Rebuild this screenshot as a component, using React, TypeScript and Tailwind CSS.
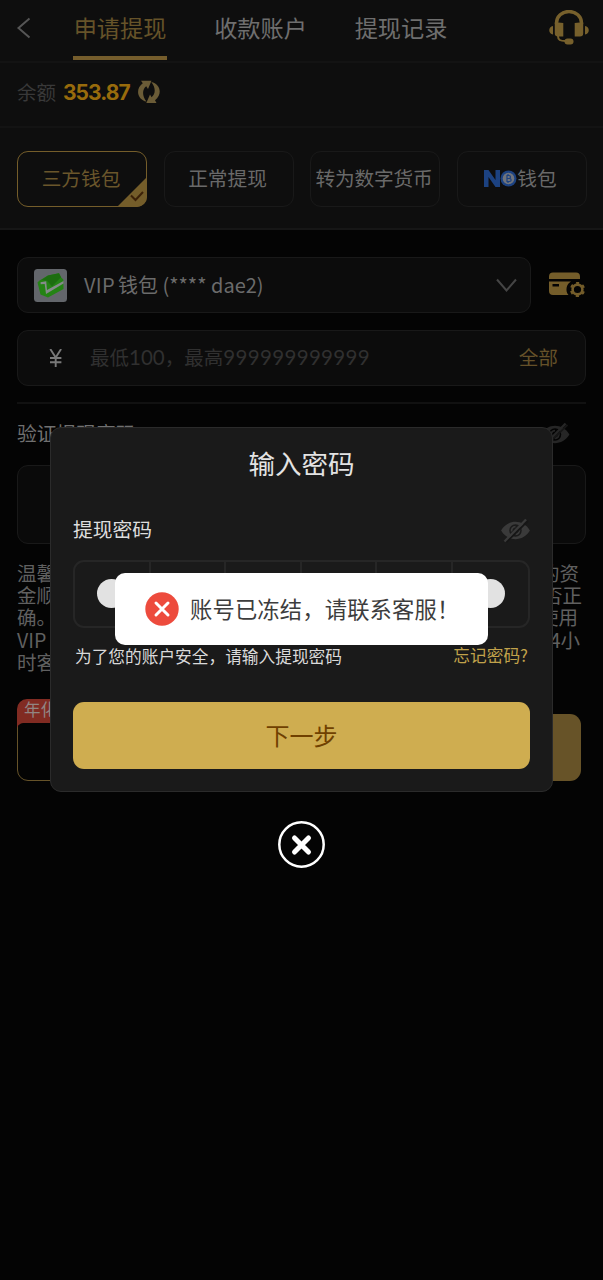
import React from "react";

const Check = () => (
  <svg className="absolute -right-px -bottom-px h-[31px] w-[31px]" viewBox="0 0 31 31" fill="none">
    <path d="M1 31 31 1v20a10 10 0 0 1-10 10Z" fill="#745d2a" />
    <path d="m15 19.500 4.500 4.500 7.500-8" stroke="#3c2108" strokeWidth="2" />
  </svg>
);

const Headset = () => (
  <svg className="h-[35px] w-[40px]" viewBox="0 0 40 35" fill="none">
    <path d="M7.500 14v-1a12.500 11.500 0 0 1 25 0v1" stroke="#77602c" strokeWidth="3.400" />
    <path d="M5.800 12.500h3.500l5 .5v13.500H9a3.200 3.200 0 0 1-3.200-3.200ZM34.200 12.500h-3.500l-5 .5v13.500h5.300a3.200 3.200 0 0 0 3.200-3.200ZM4 16v8.500c-5-1-5-7.500 0-8.500ZM36 16v8.500c5-1 5-7.500 0-8.500Z" fill="#77602c" />
    <path d="M9 26c0 4 2 5 7.500 5" stroke="#77602c" strokeWidth="2" />
    <rect x="15.500" y="28.500" width="9" height="6" rx="3" fill="#77602c" />
  </svg>
);

const Refresh = () => (
  <svg className="h-6 w-6" viewBox="0 0 24 24" fill="#6b5c37">
    <path d="M4 .800h10.500L11 9 9.200 6.200C5 9.500 5 16 9.500 21.500 1 20-2.500 9.500 5.800 3.300Z" />
    <path d="M19.500 23H9.300L13 14.500l1.600 2.800c4.200-3.300 4.200-9.800-.3-15.300 8.500 1.500 12 12 3.700 18.200Z" />
  </svg>
);

const WalletLogo = () => (
  <svg className="h-[33px] w-[33px]" viewBox="0 0 33 33" fill="none">
    <rect width="33" height="33" rx="3.500" fill="#63666b" />
    <path d="m3.500 13.500 2-2L14 6.500l11-2.300 2 4 2.300 2.300.2 9.500L14 28.500l-7.500-3Z" fill="#248314" />
    <path d="m14 6.500 11-2.300 2 4-9 9-5-5.500-5.500-.7Z" fill="#1d6d10" />
    <path d="m6.500 13.200 5.700-1 .8 8.800L29.500 12v2.500L12 25l-1.300-10-4 .2Z" fill="#858b8a" />
  </svg>
);

const CardGear = () => (
  <svg className="h-[26px] w-[37px]" viewBox="0 0 37 26" fill="none">
    <path d="M0 7V4.500A4 4 0 0 1 4 .5h23a4 4 0 0 1 4 4V7Z" fill="#745d2a" />
    <path fillRule="evenodd" d="M0 9.500h22a9 9 0 0 0-2.500 13.500H4a4 4 0 0 1-4-4ZM3.500 12v2.500H10V12Z" fill="#745d2a" />
    <g stroke="#745d2a">
      <circle cx="28.500" cy="17.500" r="4.900" strokeWidth="2.600" />
      <circle cx="28.500" cy="17.500" r="6.600" strokeWidth="2" strokeDasharray="3.200 3.711" strokeDashoffset="1.600" transform="rotate(-90 28.500 17.500)" />
    </g>
  </svg>
);

const EyeOff = ({ className }: { className: string }) => (
  <svg className={className} viewBox="0 0 30 26" fill="none">
    <path fillRule="evenodd" d="M0 13C7 1 23 1 30 13 23 25 7 25 0 13Zm15-6.500a6.500 6.500 0 1 0 0 13 6.500 6.500 0 0 0 0-13Z" fill="currentColor" />
    <path d="M15 9a4 4 0 0 0-4 5M19 12a4 4 0 0 1-4 5" stroke="currentColor" strokeWidth="1.800" />
    <path d="M5.500 25 28 3" stroke="#161616" strokeWidth="2" />
    <path d="M3.500 24.500 26 1.500" stroke="currentColor" strokeWidth="2.400" />
  </svg>
);

const notice = [
  ["温馨", "的资", "pr-[7px]"],
  ["金顺", "否正", "pr-[4px]"],
  ["确。", "使用", "pr-[8px]"],
  ["VIP", "24小", "pr-[6px]"],
  ["时客", "", ""],
];

const option = "flex h-14 w-[130px] items-center justify-center rounded-[11px] border border-[#191919] pb-[2px] pr-[2px] text-[19.700px] text-[#696969]";

export default function App() {
  return (
    <div className="relative h-[1280px] w-[603px] overflow-hidden bg-[#040404] font-['Noto_Sans_CJK_SC',sans-serif] whitespace-nowrap">
      <header className="flex h-[63px] border-b-2 border-[#131313] bg-[#0e0e0e] pl-4">
        <svg className="mt-[17px] h-[22px] w-4" viewBox="0 0 16 22" fill="none" stroke="#555" strokeWidth="2">
          <path d="M13.500 1.500 2.500 11l11 9.500" />
        </svg>
        <nav className="ml-[41px] flex gap-[47px] text-[23.200px] leading-[54px] text-[#6e6e6e]">
          <div className="flex h-[60px] w-[94px] flex-col items-center border-b-4 border-[#755d2c] text-[#665329]">申请提现</div>
          <div className="w-[93px] text-center">收款账户</div>
          <div className="w-[94px] text-center">提现记录</div>
        </nav>
        <div className="ml-[101px] pt-[10px]"><Headset /></div>
      </header>

      <section className="flex h-[65px] items-center border-b-2 border-[#131313] bg-[#0e0e0e] pb-[5px] pl-[17px]">
        <span className="w-[46px] text-[19.500px] text-[#393939]">余额</span>
        <span className="w-[74px] pt-[2px] font-['Inter',sans-serif] text-[21px] font-bold tracking-[-0.950px] text-[#986b0c]">353.87</span>
        <Refresh />
      </section>

      <section className="flex h-[102px] gap-[16.500px] border-b-2 border-[#161616] bg-[#0e0e0e] pt-[23px] pl-[17px]">
        <div className="relative flex h-14 w-[130px] items-center justify-center rounded-[11px] border border-[#745d2a] pr-[2px] pb-[2px] text-[19.700px] text-[#6a562b]">
          三方钱包
          <Check />
        </div>
        <div className={option}>正常提现</div>
        <div className={option}><span className="tracking-[-0.200px]">转为数字货币</span></div>
        <div className={option}>
          <svg className="h-[17px] w-[33px]" viewBox="0 0 33 17" fill="none">
            <path d="M0 17V0h4.500l7 10V0H16v17h-4.500l-7-10v10Z" fill="#1c4281" />
            <circle cx="24.500" cy="8.500" r="8" fill="#1c4281" />
            <circle cx="24.500" cy="8.500" r="5.800" fill="#70747b" />
            <path d="M23 5.500v6h2.500c2.200 0 2.200-3 0-3H23h2c2 0 2-3 0-3Zm1-1.500v1.500m0 6V13" stroke="#1c4281" strokeWidth="1.200" />
          </svg>
          钱包
        </div>
      </section>

      <main className="px-[17px] pt-[27px]">
        <div className="flex items-center">
          <div className="flex h-14 w-[514px] items-center rounded-[11px] border border-[#191919] bg-[#0c0c0c] pr-[13px] pl-4">
            <WalletLogo />
            <span className="ml-[17px] flex-1 text-[20px] text-[#6b6b6b]"><span className="mr-[3px] tracking-[0.300px]">VIP</span>钱包 (**** dae2)</span>
            <svg className="h-[15px] w-[21px]" viewBox="0 0 21 15" fill="none" stroke="#454545" strokeWidth="2"><path d="m1 1.500 9.500 11 9.500-11" /></svg>
          </div>
          <div className="ml-[18px]"><CardGear /></div>
        </div>

        <div className="mt-[17px] flex h-14 items-center rounded-[11px] border border-[#191919] bg-[#0c0c0c] pr-[27px] pl-[30px]">
          <svg className="h-[18px] w-[15px]" viewBox="0 0 15 18" fill="none" stroke="#797979" strokeWidth="1.900"><path d="m2.300 0 5.400 8.500L13.100 0M7.700 8.500V18M2 9h11.400M2 13.300h11.400" /></svg>
          <span className="ml-[27px] flex-1 pb-[2px] text-[19.500px] text-[#303030]">最低<span className="font-['Lato',sans-serif] text-[20.500px]">100</span>，最高<span className="font-['Lato',sans-serif] text-[20.500px] tracking-[0.350px]">999999999999</span></span>
          <span className="pb-[2px] text-[19.700px] text-[#655129]">全部</span>
        </div>

        <div className="mt-4 h-[2px] bg-[#111]" />
        <div className="flex h-[61px] items-center justify-between pr-[16px]">
          <span className="pb-[3px] text-[19.800px] text-[#707070]">验证提现密码</span>
          <EyeOff className="h-[25px] w-[30px] text-[#262626]" />
        </div>
        <div className="h-[79px] rounded-[11px] border border-[#191919] bg-[#0a0a0a]" />
        <div className="mt-[18px] text-[19.500px] leading-[22.200px] text-[#606060]">
          {notice.map(([left, right, pad]) => (
            <div key={left} className={`flex h-[22.200px] justify-between ${pad}`}>
              <span>{left}</span>
              <span>{right}</span>
            </div>
          ))}
        </div>
        <div className="mt-[41px] flex justify-between pr-[5px]">
          <div className="relative h-[67px] w-[270px] rounded-[11px] border border-[#665329]">
            <div className="absolute -top-[16px] -left-px h-[29px] w-[110px]">
              <svg className="absolute inset-0 h-[29px] w-[110px]" viewBox="0 0 110 29"><path d="M0 29V10A10 10 0 0 1 10 0h100v24H8c-5 0-7 2-8 5Z" fill="#812b22" /></svg>
              <span className="relative block pl-[7px] text-[16.500px] leading-[21px] text-[#918582]">年化</span>
            </div>
          </div>
          <div className="h-[67px] w-[270px] rounded-[11px] bg-[#675328]" />
        </div>
      </main>

      <div className="absolute top-[427px] left-[50px] flex h-[365px] w-[503px] flex-col rounded-[11px] border border-[#2b2b2b] bg-[#1a1a1a] px-[22px]">
        <h2 className="mt-[15px] text-center text-[26.500px] leading-[40px] text-[#e3e3e3]">输入密码</h2>
        <div className="mt-[32px] flex h-[30px] items-center justify-between">
          <span className="pb-[2px] text-[19.800px] text-[#dedede]">提现密码</span>
          <EyeOff className="h-[25px] w-[29px] text-[#3a3a3a]" />
        </div>
        <div className="mt-[15px] grid h-[68px] shrink-0 grid-cols-6 divide-x-2 divide-[#262626] rounded-[11px] border-2 border-[#262626]">
          {[0, 1, 2, 3, 4, 5].map((n) => (
            <div key={n} className="flex items-center justify-center"><span className="h-[29px] w-[29px] -translate-y-px rounded-full bg-[#e2e2e2]" /></div>
          ))}
        </div>
        <div className="mt-[15px] flex h-7 items-center justify-between px-[2px] text-[16.700px]">
          <span className="text-[#dadada]">为了您的账户安全，请输入提现密码</span>
          <span className="-mt-[2px] text-[#c1a24b]">忘记密码?</span>
        </div>
        <button className="mt-[31px] h-[67px] shrink-0 rounded-[11px] bg-[#cfad50] pb-[2px] text-[24px] text-[#704000]">下一步</button>
      </div>

      <svg className="absolute top-[821px] left-[278px] h-[47px] w-[47px]" viewBox="0 0 47 47" fill="none" stroke="#fff">
        <circle cx="23.500" cy="23.500" r="22.200" strokeWidth="2.500" />
        <path d="m16.500 17 14 14m0-14-14 14" strokeWidth="5" strokeLinecap="round" />
      </svg>

      <div className="absolute top-[573px] left-[115px] flex h-[72px] w-[373px] items-center rounded-[10px] bg-white pl-[30px]">
        <svg className="h-[34px] w-[34px]" viewBox="0 0 34 34" fill="none">
          <circle cx="17" cy="17" r="16.700" fill="#ed4b3d" />
          <path d="m11 11 12 12m0-12L11 23" stroke="#fff" strokeWidth="3" strokeLinecap="round" />
        </svg>
        <span className="ml-[11px] text-[22.300px] tracking-[0.150px] text-[#3d3d3d]">账号已冻结，请联系客服！</span>
      </div>
    </div>
  );
}
